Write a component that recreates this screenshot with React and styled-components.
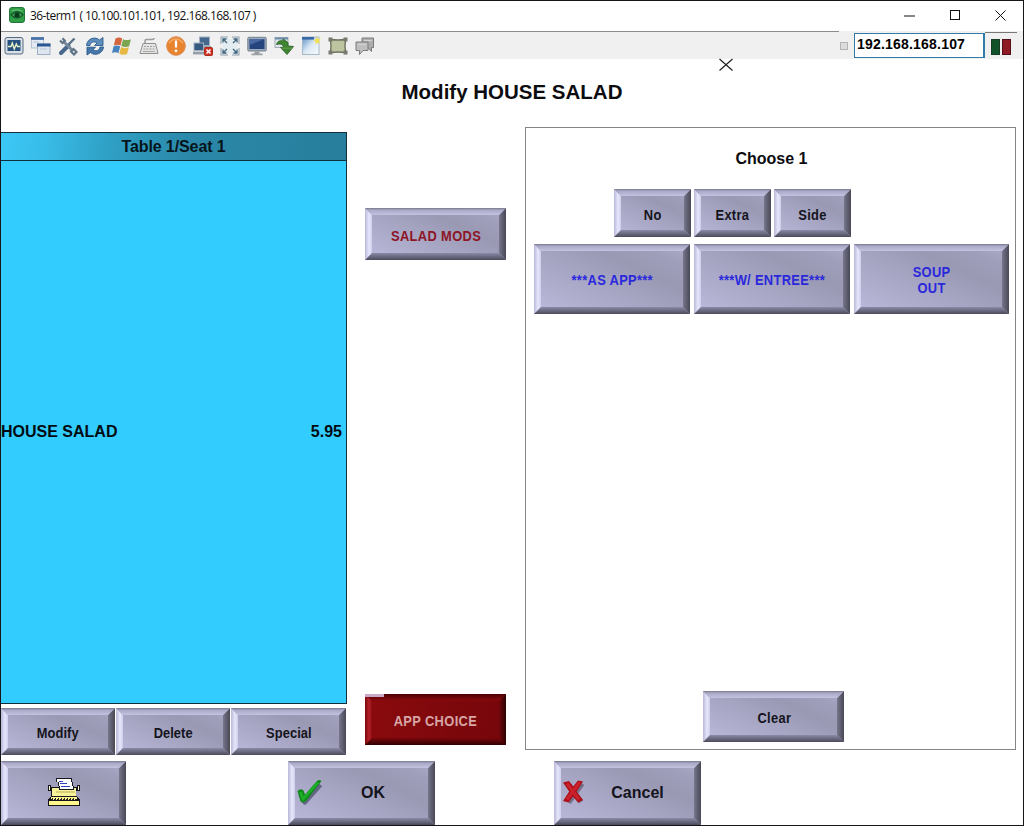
import React from "react";
import styled, { createGlobalStyle, css } from "styled-components";

const GlobalStyle = createGlobalStyle`
  *, *::before, *::after { box-sizing: border-box; }
  body { margin: 0; background: #fff; }
`;

const Window = styled.div`
  position: relative;
  width: 1024px;
  height: 826px;
  display: flex;
  flex-direction: column;
  background: #fff;
  border: 1px solid #15151a;
  overflow: hidden;
  font-family: "Liberation Sans", Arial, sans-serif;
  color: #0c0c10;
`;

const TitleBar = styled.header`
  height: 30px;
  flex: none;
  display: flex;
  align-items: center;
  padding: 0 16px 2px 8px;
`;

const WindowTitle = styled.span`
  flex: 1;
  margin-left: 5px;
  padding-top: 1px;
  font: 12px/16px "Open Sans", "Noto Sans", sans-serif;
  letter-spacing: -0.57px;
  color: #111;
  white-space: nowrap;
`;

const WindowControls = styled.div`
  display: flex;
  gap: 32.5px;
`;

const Toolbar = styled.div`
  height: 28px;
  flex: none;
  display: flex;
  align-items: center;
  background: #f0f0f0;
`;

const ToolbarIcons = styled.div`
  height: 28px;
  width: 838px;
  flex: none;
  display: flex;
  align-items: center;
  gap: 7px;
  padding-left: 3px;
  border-top: 1px solid #8c8c8c;
`;

const Grip = styled.span`
  width: 8px;
  height: 8px;
  margin: 1px 6px 0 1px;
  background: #dcdcdc;
  border: 1px solid #b4b4b4;
`;

const AddressBox = styled.div`
  width: 131px;
  height: 25px;
  padding: 0 2px;
  background: #fff;
  border: 1px solid #2f7ca8;
  border-right-width: 2px;
  font: bold 14px/20px "Liberation Sans", Arial, sans-serif;
  letter-spacing: 0.2px;
  color: #000;
`;

const StatusLights = styled.div`
  flex: 1;
  height: 26px;
  display: flex;
  align-items: center;
  justify-content: center;
  gap: 2px;
  margin: 0 6px 0 0;
  border-top: 1px solid #777;
`;

const Light = styled.span`
  width: 9px;
  height: 16px;
  margin-top: 2px;
  background: ${(p) => p.$color};
  border: 1px solid ${(p) => p.$edge};
`;

const Heading = styled.h1`
  height: 68px;
  flex: none;
  margin: 0;
  padding-top: 20px;
  text-align: center;
  font-size: 20.5px;
  line-height: 25px;
`;

const Main = styled.main`
  height: 628px;
  flex: none;
  display: flex;
  align-items: flex-start;
`;

const OrderColumn = styled.section`
  width: 346px;
  height: 628px;
  padding-top: 5px;
  display: flex;
  flex-direction: column;
`;

const OrderHeader = styled.div`
  height: 29px;
  flex: none;
  border: 1px solid #12303c;
  border-left: 0;
  background: linear-gradient(97deg, #3cc8f6 0%, #38bce8 13%, #2f9fc4 32%, #2b88a8 55%, #277e9c 100%);
  text-align: center;
  font-weight: bold;
  font-size: 16px;
  line-height: 27px;
  letter-spacing: -0.1px;
  color: #06141c;
`;

const OrderList = styled.div`
  height: 543px;
  flex: none;
  border: 1px solid #12303c;
  border-width: 0 1px 1px 0;
  background: #33ccff;
  display: flex;
  align-items: center;
`;

const OrderLine = styled.div`
  flex: 1;
  display: flex;
  justify-content: space-between;
  padding: 0 4px 0 0;
  font-weight: bold;
  font-size: 16px;
  line-height: 20px;
  color: #020a10;
`;

const OrderActions = styled.div`
  display: flex;
  gap: 1px;
  margin-top: 4px;
`;

const ModifierColumn = styled.section`
  width: 141px;
  height: 618px;
  margin-left: 18px;
  padding-top: 81px;
  display: flex;
  flex-direction: column;
  justify-content: space-between;
`;

const ChoicePanel = styled.section`
  width: 491px;
  height: 623px;
  margin-left: 19px;
  padding: 21px 6px 7px 8px;
  border: 1px solid #858585;
  display: flex;
  flex-direction: column;
`;

const PanelTitle = styled.h2`
  margin: 0 0 20px;
  font-size: 16px;
  line-height: 20px;
  text-align: center;
`;

const PrefixRow = styled.div`
  display: flex;
  gap: 3px;
  padding-left: 80px;
  margin-bottom: 7px;
`;

const ChoiceRow = styled.div`
  display: flex;
  gap: 4px;
`;

const PanelFooter = styled.div`
  margin-top: auto;
  padding-left: 169px;
`;

const Footer = styled.footer`
  display: flex;
  align-items: flex-start;
  padding-top: 6px;
`;

const greyFace = css`
  background: linear-gradient(${(p) => p.$angle || 25}deg, #bcbbdc 0%, #adaccb 28%, #9a99b4 66%, #a09fbb 84%, #b0afcc 100%);
  &::before {
    background:
      linear-gradient(90deg, #b9b8d8, #e6e6fc 4px, #cfceec 7px, transparent 7px),
      linear-gradient(270deg, #484856, #77768c 7px, transparent 8px);
  }
  &::after {
    background:
      linear-gradient(180deg, #77778a, #a9a8c6 2px, #c3c2e0 7px, transparent 8px),
      linear-gradient(0deg, #4b4b5a, #8b8aa8 7px, transparent 8px);
  }
`;

const redFace = css`
  background: linear-gradient(100deg, #8b0a0d 0%, #7d080c 60%, #76060a 100%);
  &::before {
    background:
      linear-gradient(90deg, #7c0509, #b3232a 4px, #8b0c10 7px, transparent 8px),
      linear-gradient(270deg, #2c0203, #72060a 7px, transparent 8px);
  }
  &::after {
    background:
      linear-gradient(180deg, #4c0205, #840a0e 6px, transparent 8px),
      linear-gradient(0deg, #300203, #78070b 7px, transparent 8px);
  }
`;

const BevelButton = styled.button`
  position: relative;
  flex: none;
  width: ${(p) => p.$w}px;
  height: ${(p) => p.$h}px;
  margin: 0 0 0 ${(p) => p.$ml || 0}px;
  padding: ${(p) => p.$drop || 0}px 0 0 ${(p) => p.$shift || 0}px;
  border: 0;
  display: flex;
  align-items: center;
  justify-content: center;
  font: bold 16px/18px "Liberation Sans", Arial, sans-serif;
  color: ${(p) => p.$color || "#14141c"};
  &::before, &::after {
    content: "";
    position: absolute;
    inset: 0;
  }
  &::before {
    clip-path: polygon(0 0, 7px 7px, 7px calc(100% - 7px), 0 100%, 0 0, 100% 0,
      calc(100% - 7px) 7px, calc(100% - 7px) calc(100% - 7px), 100% 100%, 100% 0);
  }
  &::after {
    clip-path: polygon(0 0, 7px 7px, calc(100% - 7px) 7px, 100% 0, 0 0, 0 100%,
      7px calc(100% - 7px), calc(100% - 7px) calc(100% - 7px), 100% 100%, 0 100%);
  }
  ${(p) => (p.$red ? redFace : greyFace)}
`;

const Caption = styled.span`
  font-size: 14px;
  line-height: 16px;
  letter-spacing: ${(p) => p.$track ?? 0.35}px;
  white-space: pre;
  transform: scaleX(0.92);
`;

const ProgressTick = styled.span`
  position: absolute;
  z-index: 1;
  top: 0;
  left: 0;
  width: 19px;
  height: 3px;
  background: #c9a9c6;
`;

const ButtonMark = styled.span`
  position: absolute;
  left: ${(p) => p.$left}px;
  top: 17px;
  display: flex;
`;

const Pointer = styled.svg`
  position: absolute;
  left: 717px;
  top: 57px;
`;

const Icon = ({ children, size = 20, box = 20 }) => (
  <svg width={size} height={size} viewBox={`0 0 ${box} ${box}`} fill="none">
    {children}
  </svg>
);

const AppIcon = () => (
  <Icon size={16} box={16}>
    <rect x=".5" y=".5" width="15" height="15" rx="2.5" fill="#2f9e45" stroke="#23743a" />
    <path d="M1 8Q8 0 15 8Q8 15 1 8Z" fill="#145c2d" />
    <path d="M3 8Q8 3.5 13 8Q8 12 3 8Z" fill="#49a65b" />
    <circle cx="8" cy="8" r="2.6" fill="#0b3b1d" />
    <path d="M3 4Q8 1.5 13 4" stroke="#70c47c" />
  </Icon>
);

const toolbarIcons = [
  <Icon key="monitor">
    <rect x="1" y="1.500" width="18" height="16.500" rx="2" fill="#d7dee6" stroke="#566b82" />
    <rect x="3.500" y="4" width="13" height="11" fill="#27527f" />
    <path d="M4 10.500h3l1.300-3.500 2 6 2-5 1.200 2.500H16" stroke="#e8f2c8" strokeWidth="1.400" />
  </Icon>,
  <Icon key="windows">
    <rect x=".5" y="1.500" width="12" height="10.500" fill="#e4ebf4" stroke="#b5c1d2" />
    <path d="M0 2.500h13" stroke="#4a73a8" strokeWidth="2.800" />
    <rect x="6.500" y="8" width="12.500" height="10.500" fill="#dde5ef" stroke="#9fb0c6" />
    <path d="M6 9h13.500" stroke="#2c568f" strokeWidth="3" />
    <path d="M2 6h6M9 13h7" stroke="#b7c4d6" />
  </Icon>,
  <Icon key="tools">
    <path d="M16.500 2.500L10 9" stroke="#5f7184" strokeWidth="2.400" />
    <path d="M10.500 9.500L3 17" stroke="#46668b" strokeWidth="4" strokeLinecap="round" />
    <path d="M5.500 5.500L15 15" stroke="#75889b" strokeWidth="3" />
    <path d="M2 4.500l2.500 2.500 2.300-2.300L4.500 2.200M13 15.500l2.500-2.500 3 3-2.500 2.500z" stroke="#607488" strokeWidth="2.200" />
  </Icon>,
  <Icon key="refresh">
    <path d="M1.500 9.500C2 2.500 10 0 14.500 4L18 1.500v8h-8.500L12 7C9 4.800 5.500 6 5 9.500z" fill="#5d8dbb" stroke="#2f5f91" strokeWidth=".9" />
    <path d="M18.500 11C18 17.500 10 20.500 5.500 16.500L2 19V11.200h8.500L8 13.700c3 2 6.500.8 7-2.700z" fill="#4478ab" stroke="#2a5687" strokeWidth=".9" />
  </Icon>,
  <Icon key="flag">
    <path d="M3.500 2.500q3.500-2 6.700 0L8.500 9.500q-3.300-1.700-6.700 0z" fill="#d4643c" />
    <path d="M11 3.200q3.700 1.700 8 0l-1.900 7q-3.700 1.500-7.800-.3z" fill="#7ba651" />
    <path d="M1.500 10.500q3.300-1.900 6.700 0L6.500 17q-3.300-1.700-6.500 0z" fill="#4682bd" />
    <path d="M9 11q4 1.700 7.900.2l-1.800 6.800q-4 1.700-7.800-.3z" fill="#e6b844" />
  </Icon>,
  <Icon key="keyboard">
    <path d="M4 7.500h12.500l2.500 10H1z" fill="#e4e4e2" stroke="#8f8f8f" />
    <path d="M6 7V4.500q0-1 1.500-1H13q2 0 2-1.500" stroke="#9c9c9c" strokeWidth="1.500" />
    <path d="M5 10.500h10.500M4.500 13h11.500" stroke="#a0a0a0" strokeWidth="1.200" strokeDasharray="2 1" />
    <path d="M4 15.500h12" stroke="#a8a8a8" />
  </Icon>,
  <Icon key="alert">
    <circle cx="10" cy="10" r="9.300" fill="#e8842f" stroke="#d98a50" />
    <path d="M3 7Q10-1 17 7" stroke="#f5a963" strokeWidth="1.500" />
    <path d="M10 4.500v7" stroke="#fff" strokeWidth="2.300" />
    <circle cx="10" cy="14.800" r="1.400" fill="#fff" />
  </Icon>,
  <Icon key="disconnect">
    <rect x="6.500" y="1" width="10" height="8.500" fill="#44678e" stroke="#a2afbd" />
    <path d="M6 11h12" stroke="#9ba6b2" strokeWidth="2" />
    <rect x="1" y="7" width="9.500" height="7.500" fill="#36597f" stroke="#a2afbd" />
    <path d="M0 17h11" stroke="#959faa" strokeWidth="2.800" />
    <rect x="11.500" y="11.500" width="8" height="8" rx="1" fill="#cf3022" stroke="#a92b20" />
    <path d="M13.500 13.500l4 4m0-4l-4 4" stroke="#fff" strokeWidth="1.600" />
  </Icon>,
  <Icon key="fullscreen">
    <rect x="1" y="1" width="18" height="18" fill="#e3ecf1" stroke="#91a0aa" />
    <path d="M8 0h4v3H8zM8 17h4v3H8zM0 8h3v4H0zM17 8h3v4h-3z" fill="#f0f0f0" />
    <path d="M3 6.500V3H6.500M13.500 3H17v3.500M17 13.500V17h-3.500M6.500 17H3v-3.500M3 3l4 4M17 3l-4 4M17 17l-4-4M3 17l4-4" stroke="#40647b" strokeWidth="1.300" />
  </Icon>,
  <Icon key="display">
    <rect x=".8" y="1.300" width="18.400" height="13.700" rx="1" fill="#9caaba" stroke="#72808f" />
    <rect x="2.500" y="3" width="15" height="10" fill="#25447d" />
    <path d="M2.500 3h15L2.500 9z" fill="#4a69a0" />
    <path d="M7.500 15.500h5v2h3v1.800H4.500v-1.800h3z" fill="#9b9fa4" />
  </Icon>,
  <Icon key="transfer">
    <rect x="1" y="1.500" width="13" height="10" fill="#dde5ea" stroke="#9fadb8" />
    <path d="M1 2.500h13" stroke="#6c8dab" strokeWidth="2" />
    <path d="M2.500 8.500Q4 3.500 9 5V3l5 3.500V10l5.500.5L13 18.500 6.500 11.500l3.500-.5Q8 6.500 2.500 8.500z" fill="#3f8430" stroke="#2c6427" strokeWidth=".9" />
    <path d="M7.500 12.200h11" stroke="#6aa156" strokeWidth=".9" />
  </Icon>,
  <Icon key="new-window">
    <defs>
      <linearGradient id="pane" x2="1" y2="1">
        <stop stopColor="#5f8fc8" /><stop offset=".5" stopColor="#dbe9f5" /><stop offset="1" stopColor="#f8fafb" />
      </linearGradient>
    </defs>
    <rect x="1.500" y="1" width="16.500" height="17.500" fill="url(#pane)" stroke="#a8b9ca" />
    <path d="M1 2.300H13" stroke="#3868a5" strokeWidth="2.600" />
    <path d="M16 0l1 3 3-.5-2 2.500 1.500 2.500-3-.8-2 2 .1-3L12 4l3-1z" fill="#f0e05b" />
  </Icon>,
  <Icon key="region">
    <path d="M2.500 3.500q7.500 1 15 0-1 6.500 0 13-7.500-1-15 0 1-6.500 0-13z" fill="#bdc5a0" stroke="#6d725e" strokeWidth="1.400" />
    <path d="M.5 1.500h4v4h-4zM15.500 1.500h4v4h-4zM.5 14.500h4v4h-4zM15.500 14.500h4v4h-4z" fill="#77796f" />
  </Icon>,
  <Icon key="chat">
    <path d="M7 2h11.500v9.500h-2v4l-3.500-4H7z" fill="#aeaeae" stroke="#7b7b7b" />
    <path d="M1 6h12v8.500H8L4.500 18.500v-4H1z" fill="#bfbfbf" stroke="#7b7b7b" />
    <path d="M9 4.500h8M3 8.500h8" stroke="#d4d4d4" />
  </Icon>,
];

const Typewriter = () => (
  <svg width="34" height="30" viewBox="0 0 34 30" shapeRendering="crispEdges">
    <path d="M1 7h3v2h26V7h3v6h-4v5l4 4v6H1v-6l3-4v-5H1z" fill="#14141c" />
    <path d="M2 8h1v4H2zM31 8h1v4h-1z" fill="#fffbd0" />
    <path d="M5 10h24v8H5z" fill="#f7f19a" />
    <path d="M4 19h26v3H4zM2 23h30v4H2z" fill="#fff68c" />
    <path d="M9 0h16v4h1v4h1v4H12V8h-1V4H9z" fill="#181820" />
    <path d="M10 1h14v3h1v4h1v3H13V8h-1V4h-2z" fill="#fff" />
    <path d="M12 3h4v1h-4zM13 5h7v1h-7zM14 8h9v1h-9z" fill="#3044c0" />
    <path d="M9 13h19v2H9z" fill="#d8d078" />
    <path d="M6 18.500h22M4 21.500h26" stroke="#202020" strokeDasharray="2 1" />
    <path d="M5 20h24" stroke="#202020" strokeWidth="1" strokeDasharray="1 2" />
  </svg>
);

const CheckMark = () => (
  <svg width="28" height="28" viewBox="0 0 28 28">
    <path d="M4 15l4 8L23.500 5.500" fill="none" stroke="#46486a" strokeWidth="5" strokeLinejoin="round" opacity=".7" transform="translate(.8 1.200)" />
    <path d="M1.500 13q3-3 6-.5l1.500 4L20.500 3.500q2.500-2.500 5-.5L10.500 22.500q-3 3.500-6 1z" fill="#118a1c" />
    <path d="M4.500 14l2.500 7L22 4.500" fill="none" stroke="#1fae2b" strokeWidth="2.600" />
  </svg>
);

const CrossMark = () => (
  <svg width="26" height="28" viewBox="0 0 26 28">
    <path d="M7 6l12 17M20 4.500L6.500 23.500" stroke="#4a3e53" strokeWidth="5.500" opacity=".55" transform="translate(1 1)" />
    <path d="M2 4.500l6-1.500 4.200 5.500L17 2.500l5 1-6.500 10L22 22l-5 2.500-5-6L7.500 24.500l-5.500-1.500 6.200-9.500z" fill="#b00f17" />
    <path d="M6 5.500l12 16M18.500 4.500L6 21.500" stroke="#c9222c" strokeWidth="3" />
  </svg>
);

const BLUE = "#2a28dc";

const Key = ({ children, track, ...rest }) => (
  <BevelButton {...rest}>
    <Caption $track={track}>{children}</Caption>
  </BevelButton>
);

export default function App() {
  return (
    <>
      <GlobalStyle />
      <Window>
        <TitleBar>
          <AppIcon />
          <WindowTitle>36-term1 ( 10.100.101.101, 192.168.168.107 )</WindowTitle>
          <WindowControls>
            <Icon size={13} box={13}><path d="M1 7h11" stroke="#111" /></Icon>
            <Icon size={13} box={13}><rect x="1.500" y="1.500" width="9" height="9" stroke="#111" /></Icon>
            <Icon size={13} box={13}><path d="M1.500 1.500l10 10m0-10l-10 10" stroke="#111" /></Icon>
          </WindowControls>
        </TitleBar>

        <Toolbar>
          <ToolbarIcons>{toolbarIcons}</ToolbarIcons>
          <Grip />
          <AddressBox>192.168.168.107</AddressBox>
          <StatusLights>
            <Light $color="#11522a" $edge="#173b23" />
            <Light $color="#8f1a24" $edge="#521118" />
          </StatusLights>
        </Toolbar>

        <Heading>Modify HOUSE SALAD</Heading>

        <Main>
          <OrderColumn>
            <OrderHeader>Table 1/Seat 1</OrderHeader>
            <OrderList>
              <OrderLine>
                <span>HOUSE SALAD</span>
                <span>5.95</span>
              </OrderLine>
            </OrderList>
            <OrderActions>
              <Key $w={114} $h={47} $drop={2} track={0.05}>Modify</Key>
              <Key $w={114} $h={47} $drop={2} $shift={1} track={0.05}>Delete</Key>
              <Key $w={115} $h={47} $drop={2} track={0.1}>Special</Key>
            </OrderActions>
          </OrderColumn>

          <ModifierColumn>
            <Key $w={141} $h={52} $drop={4} $shift={1} $color="#8c1526" track={0.4}>SALAD MODS</Key>
            <BevelButton $w={141} $h={51} $drop={2} $red $color="#d7a5a5">
              <ProgressTick />
              <Caption $track={0.4}>APP CHOICE</Caption>
            </BevelButton>
          </ModifierColumn>

          <ChoicePanel>
            <PanelTitle>Choose 1</PanelTitle>
            <PrefixRow>
              <Key $w={77} $h={48} $drop={3}>No</Key>
              <Key $w={77} $h={48} $drop={3}>Extra</Key>
              <Key $w={77} $h={48} $drop={3}>Side</Key>
            </PrefixRow>
            <ChoiceRow>
              <Key $w={156} $h={70} $drop={1} $color={BLUE}>***AS APP***</Key>
              <Key $w={156} $h={70} $drop={1} $color={BLUE}>***W/ ENTREE***</Key>
              <Key $w={155} $h={70} $drop={1} $color={BLUE}>{"SOUP\nOUT"}</Key>
            </ChoiceRow>
            <PanelFooter>
              <Key $w={141} $h={51} $drop={2} $shift={1}>Clear</Key>
            </PanelFooter>
          </ChoicePanel>
        </Main>

        <Footer>
          <BevelButton $w={125} $h={64} aria-label="Keyboard"><Typewriter /></BevelButton>
          <BevelButton $w={147} $h={64} $ml={162} $shift={23}>
            <ButtonMark $left={8}><CheckMark /></ButtonMark>
            OK
          </BevelButton>
          <BevelButton $w={147} $h={64} $ml={119} $shift={20}>
            <ButtonMark $left={7}><CrossMark /></ButtonMark>
            Cancel
          </BevelButton>
        </Footer>

        <Pointer width="16" height="14" viewBox="0 0 16 14">
          <path d="M1.500 1l13 11.500M14.500 1l-13 11.500" stroke="#222" strokeWidth="1.200" />
        </Pointer>
      </Window>
    </>
  );
}
